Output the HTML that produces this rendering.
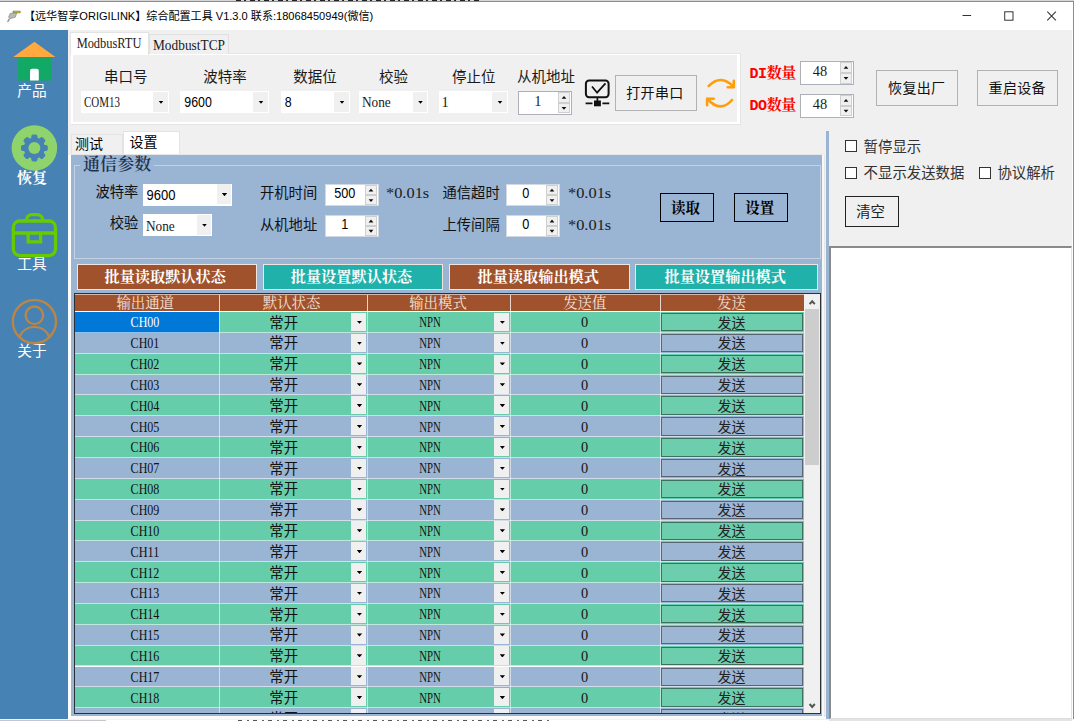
<!DOCTYPE html>
<html lang="zh-CN"><head><meta charset="utf-8"><title>综合配置工具</title>
<style>
html,body{margin:0;padding:0;}
body{width:1074px;height:721px;overflow:hidden;background:#fff;position:relative;font-family:"Liberation Sans","Noto Sans CJK SC",sans-serif;color:#000;}
div,span.t{position:absolute;box-sizing:border-box;}
span.t{white-space:nowrap;}
svg{position:absolute;overflow:visible;}
.ya{font-family:"Liberation Sans","Noto Sans CJK SC",sans-serif;}
.ss{font-family:"Liberation Serif","Noto Serif CJK SC",serif;}
.yn{font-family:"Liberation Sans",sans-serif;transform:scaleY(1.14);}
.ms{font-family:"Liberation Mono","Noto Serif CJK SC",monospace;}
.sm{font-family:"Liberation Serif",serif;color:#1a1a1a;}
.btn{border:1px solid #b2b2b2;background:#f0f0f0;}
.tri2{background:#000;clip-path:polygon(0 0,100% 0,50% 100%);}
</style></head><body>

<div style="left:0px;top:0px;width:1074px;height:1px;background:#d6d6d6;"></div>
<div style="left:0px;top:1px;width:1074px;height:1px;background:#8c8c8c;"></div>
<div style="left:236px;top:0px;width:243px;height:1px;background:repeating-linear-gradient(90deg,#222 0 5px,#d6d6d6 5px 8px,#222 8px 10px,#d6d6d6 10px 14px);"></div>
<div style="left:1073px;top:1px;width:1px;height:720px;background:#8c8c8c;"></div>
<div style="left:0px;top:30px;width:1072px;height:689px;background:#f0f0f0;"></div>
<svg style="left:6px;top:9.7px" width="17" height="14" viewBox="0 0 17 14"><path d="M7 1.2h7.2v1.6H7z" fill="#e4dc28" stroke="#5e580c" stroke-width=".6"/><path d="M4.2 3.4l6.6-.3-1.6 4.2-5.4 1.4-1.2-1.6z" fill="#b9b9b9" stroke="#7a7a7a" stroke-width=".6"/><path d="M2.6 8.6l1.6.8-2.2 3-1-.6z" fill="#9a9a9a"/></svg>
<span class="t ya" style="left:24px;top:6.3px;height:20px;line-height:20px;font-size:11.07px;">【远华智享ORIGILINK】综合配置工具 V1.3.0 联系:18068450949(微信)</span>
<svg style="left:960px;top:8px" width="100" height="16" viewBox="0 0 100 16"><path d="M2.5 7.500h8.600" stroke="#333" stroke-width="1" fill="none"/><rect x="44.700" y="3.800" width="8.300" height="8.400" stroke="#333" stroke-width="1" fill="none"/><path d="M87.300 3.700l8.600 8.600M95.900 3.700l-8.600 8.600" stroke="#333" stroke-width="1.050" fill="none"/></svg>
<div style="left:0px;top:30px;width:68px;height:689px;background:#4682b4;"></div>
<svg style="left:0;top:30px;z-index:2" width="68" height="340" viewBox="0 30 68 340"><rect x="18" y="56" width="33.3" height="24.6" fill="#12a865"/><path d="M13.2 56.9L34.4 41.8L55.4 56.9z" fill="#ffa940"/><path d="M30 80.6v-9.6a2.2 2.2 0 0 1 2.2-2.2h4.4a2.2 2.2 0 0 1 2.2 2.2v9.6z" fill="#fff"/><circle cx="34.4" cy="148" r="22.8" fill="#8fd36d"/><g fill="#4682b4" transform="translate(34.4 148)"><rect x="-3.1" y="-13.4" width="6.2" height="7" rx="1.8" transform="rotate(0)"/><rect x="-3.1" y="-13.4" width="6.2" height="7" rx="1.8" transform="rotate(45)"/><rect x="-3.1" y="-13.4" width="6.2" height="7" rx="1.8" transform="rotate(90)"/><rect x="-3.1" y="-13.4" width="6.2" height="7" rx="1.8" transform="rotate(135)"/><rect x="-3.1" y="-13.4" width="6.2" height="7" rx="1.8" transform="rotate(180)"/><rect x="-3.1" y="-13.4" width="6.2" height="7" rx="1.8" transform="rotate(225)"/><rect x="-3.1" y="-13.4" width="6.2" height="7" rx="1.8" transform="rotate(270)"/><rect x="-3.1" y="-13.4" width="6.2" height="7" rx="1.8" transform="rotate(315)"/><circle r="10.6"/></g><circle cx="34.4" cy="148" r="6" fill="#8fd36d"/><g fill="none" stroke="#66cc00" stroke-width="3.3"><rect x="13.3" y="221" width="42.2" height="34.6" rx="6.5"/><path d="M26.6 221v-1.2a5.2 5.2 0 0 1 5.2-5.2h5.6a5.2 5.2 0 0 1 5.2 5.2v1.2"/><path d="M13.3 233h42.2"/><path d="M28.2 233v8.800h12.400v-8.800"/></g><g fill="none" stroke="#b8864b" stroke-width="2.4"><circle cx="34.4" cy="321.6" r="21.6"/><circle cx="34.4" cy="315.3" r="8.8"/><path d="M19.6 336.5a16.2 16.2 0 0 1 29.6 0"/></g></svg>
<span class="t ya" style="left:2px;width:60px;text-align:center;top:81px;height:20px;line-height:20px;font-size:14.7px;color:#fff;">产品</span>
<span class="t ss" style="left:2px;width:60px;text-align:center;top:167.5px;height:20px;line-height:20px;font-size:15px;color:#fff;font-weight:bold;">恢复</span>
<span class="t ya" style="left:2px;width:60px;text-align:center;top:254px;height:20px;line-height:20px;font-size:14.7px;color:#fff;">工具</span>
<span class="t ya" style="left:2px;width:60px;text-align:center;top:341px;height:20px;line-height:20px;font-size:14.7px;color:#fff;">关于</span>
<div style="left:70.5px;top:53px;width:670px;height:72px;background:#e4e4e4;"></div>
<div style="left:70.5px;top:53px;width:669px;height:71px;background:#fff;border-top:1px solid #e6e6e6;"></div>
<div style="left:73.3px;top:55px;width:664.2px;height:67px;background:#f0f0f0;"></div>
<div style="left:149px;top:34px;width:79.5px;height:20px;background:#f0f0f0;border:1px solid #e0e0e0;border-bottom:none;"></div>
<div style="left:70px;top:32px;width:79px;height:23px;background:#fff;border:1px solid #e3e3e3;border-bottom:none;"></div>
<span class="t sm" style="left:69px;width:80px;text-align:center;top:33px;height:20px;line-height:20px;font-size:12px;font-size:14.4px;transform:scaleX(0.862);">ModbusRTU</span>
<span class="t sm" style="left:148.5px;width:80px;text-align:center;top:34.5px;height:20px;line-height:20px;font-size:12px;font-size:14.4px;transform:scaleX(0.928);">ModbustTCP</span>
<span class="t ya" style="left:85.8px;width:80px;text-align:center;top:66.8px;height:20px;line-height:20px;font-size:14.5px;color:#1a1a1a;">串口号</span>
<span class="t ya" style="left:185px;width:80px;text-align:center;top:66.8px;height:20px;line-height:20px;font-size:14.5px;color:#1a1a1a;">波特率</span>
<span class="t ya" style="left:275px;width:80px;text-align:center;top:66.8px;height:20px;line-height:20px;font-size:14.5px;color:#1a1a1a;">数据位</span>
<span class="t ya" style="left:353.4px;width:80px;text-align:center;top:66.8px;height:20px;line-height:20px;font-size:14.5px;color:#1a1a1a;">校验</span>
<span class="t ya" style="left:433.8px;width:80px;text-align:center;top:66.8px;height:20px;line-height:20px;font-size:14.5px;color:#1a1a1a;">停止位</span>
<span class="t ya" style="left:506px;width:80px;text-align:center;top:66.8px;height:20px;line-height:20px;font-size:14.5px;color:#1a1a1a;">从机地址</span>
<div style="left:80.5px;top:91.1px;width:88px;height:21.8px;background:#fff;"></div>
<div style="left:153.3px;top:91.9px;width:14.4px;height:19.8px;background:#f0f0f0;"></div>
<div class="tri2" style="left:158.3px;top:100.6px;width:5.4px;height:3.2px;"></div>
<span class="t sm" style="left:83.5px;top:91.7px;height:20px;line-height:20px;font-size:12px;font-size:14.4px;transform:scaleX(0.763);transform-origin:0 50%;">COM13</span>
<div style="left:180px;top:91.1px;width:88.5px;height:21.8px;background:#fff;"></div>
<div style="left:253.3px;top:91.9px;width:14.4px;height:19.8px;background:#f0f0f0;"></div>
<div class="tri2" style="left:258.3px;top:100.6px;width:5.4px;height:3.2px;"></div>
<span class="t yn" style="left:184.3px;top:92.2px;height:20px;line-height:20px;font-size:12.4px;">9600</span>
<div style="left:280.5px;top:91.1px;width:69px;height:21.8px;background:#fff;"></div>
<div style="left:334.3px;top:91.9px;width:14.4px;height:19.8px;background:#f0f0f0;"></div>
<div class="tri2" style="left:339.3px;top:100.6px;width:5.4px;height:3.2px;"></div>
<span class="t yn" style="left:284.8px;top:92.2px;height:20px;line-height:20px;font-size:12.4px;">8</span>
<div style="left:359px;top:91.1px;width:69px;height:21.8px;background:#fff;"></div>
<div style="left:412.8px;top:91.9px;width:14.4px;height:19.8px;background:#f0f0f0;"></div>
<div class="tri2" style="left:417.8px;top:100.6px;width:5.4px;height:3.2px;"></div>
<span class="t sm" style="left:362px;top:91.7px;height:20px;line-height:20px;font-size:12px;font-size:14.4px;transform:scaleX(0.923);transform-origin:0 50%;">None</span>
<div style="left:438.5px;top:91.1px;width:69px;height:21.8px;background:#fff;"></div>
<div style="left:492.3px;top:91.9px;width:14.4px;height:19.8px;background:#f0f0f0;"></div>
<div class="tri2" style="left:497.3px;top:100.6px;width:5.4px;height:3.2px;"></div>
<span class="t sm" style="left:441.5px;top:91.7px;height:20px;line-height:20px;font-size:12px;font-size:14.4px;transform:scaleX(1.0);transform-origin:0 50%;">1</span>
<div style="left:517.5px;top:91px;width:54.5px;height:23.7px;background:#fff;border:1px solid #adb0b6;"></div>
<div style="left:558px;top:92.2px;width:12.2px;height:10.55px;background:#f0f0f0;border:1px solid #cfcfcf;"></div>
<div style="left:558px;top:102.95px;width:12.2px;height:10.55px;background:#f0f0f0;border:1px solid #cfcfcf;"></div>
<svg style="left:561.10px;top:91.00px" width="6" height="23.7" viewBox="0 0 6 23.7"><path d="M0.600 7.77L3 4.97L5.400 7.77z" fill="#111"/><path d="M0.600 15.92L3 18.72L5.400 15.92z" fill="#111"/></svg>
<span class="t sm" style="left:517.75px;width:40px;text-align:center;top:91.15px;height:20px;line-height:20px;font-size:12px;font-size:14.4px;transform:scaleX(1.0);">1</span>
<svg style="left:583px;top:78px" width="28" height="30" viewBox="0 0 28 30"><rect x="2.9" y="2.5" width="22.7" height="16.7" rx="3.2" fill="none" stroke="#111" stroke-width="2"/><path d="M9 8.5l5.1 6.2l8.4-9.3" fill="none" stroke="#111" stroke-width="1.8"/><path d="M14.4 20v3" stroke="#111" stroke-width="1.7"/><rect x="11" y="22.5" width="6.9" height="5.8" fill="#111"/><path d="M2.6 25.3h6.9M19.4 25.3h6.9" stroke="#111" stroke-width="1.8"/></svg>
<div class="btn" style="left:615px;top:75px;width:82px;height:36px;"></div>
<span class="t ya" style="left:613.9px;width:82px;text-align:center;top:82.9px;height:20px;line-height:20px;font-size:14px;letter-spacing:.3px;color:#111;">打开串口</span>
<svg style="left:700px;top:72px" width="42" height="42" viewBox="0 0 42 42"><g fill="none" stroke="#ff9d0a" stroke-width="2.6" stroke-linecap="round" stroke-linejoin="round"><path d="M8.7 14Q20.8 1.6 33.4 14.6"/><path d="M33.8 8.7V15.3H27.7"/><path d="M32 28Q20.4 41.2 7.4 27"/><path d="M13.7 26.7H7.1V33.2"/></g></svg>
<span class="t ms" style="left:749.5px;top:65.2px;height:20px;line-height:20px;font-size:15px;font-weight:bold;color:#ff0000;letter-spacing:-.4px;">DI数量</span>
<span class="t ms" style="left:749.5px;top:97.2px;height:20px;line-height:20px;font-size:15px;font-weight:bold;color:#ff0000;letter-spacing:-.4px;">DO数量</span>
<div style="left:800px;top:61px;width:54px;height:23.8px;background:#fff;border:1px solid #adb0b6;"></div>
<div style="left:840px;top:62.2px;width:12.2px;height:10.6px;background:#f0f0f0;border:1px solid #cfcfcf;"></div>
<div style="left:840px;top:73px;width:12.2px;height:10.6px;background:#f0f0f0;border:1px solid #cfcfcf;"></div>
<svg style="left:843.10px;top:61.00px" width="6" height="23.8" viewBox="0 0 6 23.8"><path d="M0.600 7.80L3 5.00L5.400 7.80z" fill="#111"/><path d="M0.600 16.00L3 18.80L5.400 16.00z" fill="#111"/></svg>
<span class="t sm" style="left:800px;width:40px;text-align:center;top:61.2px;height:20px;line-height:20px;font-size:12px;font-size:14.4px;transform:scaleX(1.0);">48</span>
<div style="left:800px;top:94px;width:54px;height:23.5px;background:#fff;border:1px solid #adb0b6;"></div>
<div style="left:840px;top:95.2px;width:12.2px;height:10.45px;background:#f0f0f0;border:1px solid #cfcfcf;"></div>
<div style="left:840px;top:105.85px;width:12.2px;height:10.45px;background:#f0f0f0;border:1px solid #cfcfcf;"></div>
<svg style="left:843.10px;top:94.00px" width="6" height="23.5" viewBox="0 0 6 23.5"><path d="M0.600 7.72L3 4.92L5.400 7.72z" fill="#111"/><path d="M0.600 15.77L3 18.57L5.400 15.77z" fill="#111"/></svg>
<span class="t sm" style="left:800px;width:40px;text-align:center;top:94.05px;height:20px;line-height:20px;font-size:12px;font-size:14.4px;transform:scaleX(1.0);">48</span>
<div class="btn" style="left:876px;top:69.5px;width:81.5px;height:36.3px;"></div>
<span class="t ya" style="left:875.7px;width:82px;text-align:center;top:78px;height:20px;line-height:20px;font-size:14px;letter-spacing:.3px;color:#111;">恢复出厂</span>
<div class="btn" style="left:976.5px;top:69.5px;width:81.5px;height:36.3px;"></div>
<span class="t ya" style="left:976.2px;width:82px;text-align:center;top:78px;height:20px;line-height:20px;font-size:14px;letter-spacing:.3px;color:#111;">重启设备</span>
<div style="left:70.5px;top:134px;width:52px;height:20.4px;background:#f0f0f0;border:1px solid #e3e3e3;border-bottom:none;"></div>
<div style="left:122.5px;top:131px;width:57px;height:23.5px;background:#fff;border:1px solid #e3e3e3;border-bottom:none;"></div>
<span class="t ya" style="left:75px;top:133.8px;height:20px;line-height:20px;font-size:14px;">测试</span>
<span class="t ya" style="left:129.6px;top:132.2px;height:20px;line-height:20px;font-size:14px;">设置</span>
<div style="left:68px;top:155px;width:3.5px;height:562px;background:#fff;"></div>
<div style="left:71px;top:154px;width:752px;height:1px;background:#e6e6e6;"></div>
<div style="left:822px;top:155px;width:2px;height:562px;background:#f7f7f7;"></div>
<div style="left:824px;top:155px;width:1px;height:562px;background:#e6e6e6;"></div>
<div style="left:71px;top:716px;width:753px;height:1.3px;background:#fbfbfb;"></div>
<div style="left:71.4px;top:154.6px;width:750.9px;height:561.3px;background:#9ab4d3;"></div>
<div style="left:826px;top:131px;width:3px;height:588.5px;background:#9ab4d3;"></div>
<div style="left:74px;top:165px;width:746.5px;height:94px;border:1px solid #c3d1e2;"></div>
<span class="t ss" style="left:80px;top:154.5px;height:20px;line-height:20px;font-size:17px;color:#1f3350;font-weight:600;background:#9ab4d3;padding:0 3px;letter-spacing:.1px;">通信参数</span>
<span class="t ya" style="left:58.4px;width:80px;text-align:right;top:182.3px;height:20px;line-height:20px;font-size:14.3px;color:#111;">波特率</span>
<span class="t ya" style="left:58.4px;width:80px;text-align:right;top:212.5px;height:20px;line-height:20px;font-size:14.3px;color:#111;">校验</span>
<div style="left:143px;top:183.5px;width:89px;height:22px;background:#fff;"></div>
<div style="left:216.8px;top:184.3px;width:14.4px;height:20px;background:#f0f0f0;"></div>
<div class="tri2" style="left:221.8px;top:193.1px;width:5.4px;height:3.2px;"></div>
<span class="t yn" style="left:146.6px;top:184.7px;height:20px;line-height:20px;font-size:13px;">9600</span>
<div style="left:143px;top:214px;width:69px;height:22px;background:#fff;"></div>
<div style="left:196.8px;top:214.8px;width:14.4px;height:20px;background:#f0f0f0;"></div>
<div class="tri2" style="left:201.8px;top:223.6px;width:5.4px;height:3.2px;"></div>
<span class="t sm" style="left:146px;top:215.5px;height:20px;line-height:20px;font-size:12px;font-size:14.4px;transform:scaleX(0.923);transform-origin:0 50%;">None</span>
<span class="t ya" style="left:260px;top:183.3px;height:20px;line-height:20px;font-size:14.3px;color:#111;">开机时间</span>
<span class="t ya" style="left:260px;top:215px;height:20px;line-height:20px;font-size:14.3px;color:#111;">从机地址</span>
<div style="left:325px;top:183.8px;width:53.7px;height:22.7px;background:#fff;border:1px solid #d3d9e2;"></div>
<div style="left:364.7px;top:185px;width:12.2px;height:10.05px;background:#f0f0f0;border:1px solid #cfcfcf;"></div>
<div style="left:364.7px;top:195.25px;width:12.2px;height:10.05px;background:#f0f0f0;border:1px solid #cfcfcf;"></div>
<svg style="left:367.80px;top:183.80px" width="6" height="22.7" viewBox="0 0 6 22.7"><path d="M0.600 7.52L3 4.72L5.400 7.52z" fill="#111"/><path d="M0.600 15.17L3 17.97L5.400 15.17z" fill="#111"/></svg>
<span class="t yn" style="left:324.85px;width:40px;text-align:center;top:183.45px;height:20px;line-height:20px;font-size:12.7px;">500</span>
<div style="left:325px;top:215px;width:53.7px;height:22.3px;background:#fff;border:1px solid #d3d9e2;"></div>
<div style="left:364.7px;top:216.2px;width:12.2px;height:9.85px;background:#f0f0f0;border:1px solid #cfcfcf;"></div>
<div style="left:364.7px;top:226.25px;width:12.2px;height:9.85px;background:#f0f0f0;border:1px solid #cfcfcf;"></div>
<svg style="left:367.80px;top:215.00px" width="6" height="22.3" viewBox="0 0 6 22.3"><path d="M0.600 7.42L3 4.62L5.400 7.42z" fill="#111"/><path d="M0.600 14.87L3 17.67L5.400 14.87z" fill="#111"/></svg>
<span class="t yn" style="left:324.85px;width:40px;text-align:center;top:214.45px;height:20px;line-height:20px;font-size:12.7px;">1</span>
<span class="t sm" style="left:386px;top:183.4px;height:20px;line-height:20px;font-size:12px;letter-spacing:0px;font-size:14.4px;transform:scaleX(1.137);transform-origin:0 50%;">*0.01s</span>
<span class="t ya" style="left:442.5px;top:183.4px;height:20px;line-height:20px;font-size:14.3px;color:#111;">通信超时</span>
<span class="t ya" style="left:442.5px;top:214.8px;height:20px;line-height:20px;font-size:14.3px;color:#111;">上传间隔</span>
<div style="left:506px;top:183.8px;width:53.7px;height:22.7px;background:#fff;border:1px solid #d3d9e2;"></div>
<div style="left:545.7px;top:185px;width:12.2px;height:10.05px;background:#f0f0f0;border:1px solid #cfcfcf;"></div>
<div style="left:545.7px;top:195.25px;width:12.2px;height:10.05px;background:#f0f0f0;border:1px solid #cfcfcf;"></div>
<svg style="left:548.80px;top:183.80px" width="6" height="22.7" viewBox="0 0 6 22.7"><path d="M0.600 7.52L3 4.72L5.400 7.52z" fill="#111"/><path d="M0.600 15.17L3 17.97L5.400 15.17z" fill="#111"/></svg>
<span class="t yn" style="left:505.85px;width:40px;text-align:center;top:183.45px;height:20px;line-height:20px;font-size:12.7px;">0</span>
<div style="left:506px;top:215px;width:53.7px;height:22.3px;background:#fff;border:1px solid #d3d9e2;"></div>
<div style="left:545.7px;top:216.2px;width:12.2px;height:9.85px;background:#f0f0f0;border:1px solid #cfcfcf;"></div>
<div style="left:545.7px;top:226.25px;width:12.2px;height:9.85px;background:#f0f0f0;border:1px solid #cfcfcf;"></div>
<svg style="left:548.80px;top:215.00px" width="6" height="22.3" viewBox="0 0 6 22.3"><path d="M0.600 7.42L3 4.62L5.400 7.42z" fill="#111"/><path d="M0.600 14.87L3 17.67L5.400 14.87z" fill="#111"/></svg>
<span class="t yn" style="left:505.85px;width:40px;text-align:center;top:214.45px;height:20px;line-height:20px;font-size:12.7px;">0</span>
<span class="t sm" style="left:567.5px;top:183.4px;height:20px;line-height:20px;font-size:12px;font-size:14.4px;transform:scaleX(1.137);transform-origin:0 50%;">*0.01s</span>
<span class="t sm" style="left:567.5px;top:214.8px;height:20px;line-height:20px;font-size:12px;font-size:14.4px;transform:scaleX(1.137);transform-origin:0 50%;">*0.01s</span>
<div style="left:659.7px;top:192.7px;width:54px;height:29px;border:1px solid #000;"></div>
<span class="t ss" style="left:658.5px;width:54px;text-align:center;top:197.5px;height:20px;line-height:20px;font-size:14.5px;font-weight:bold;">读取</span>
<div style="left:734px;top:192.7px;width:54px;height:29px;border:1px solid #000;"></div>
<span class="t ss" style="left:732.8px;width:54px;text-align:center;top:197.5px;height:20px;line-height:20px;font-size:14.5px;font-weight:bold;">设置</span>
<div style="left:76.5px;top:263.5px;width:180px;height:26.3px;background:#a0522d;border:1px solid #f1e4de;"></div>
<span class="t ss" style="left:75.2px;width:180.0px;text-align:center;top:267px;height:20px;line-height:20px;font-size:15.2px;font-weight:bold;color:#fff;">批量读取默认状态</span>
<div style="left:263px;top:263.5px;width:179.6px;height:26.3px;background:#20b2aa;border:1px solid #f1e4de;"></div>
<span class="t ss" style="left:261.7px;width:179.60000000000002px;text-align:center;top:267px;height:20px;line-height:20px;font-size:15.2px;font-weight:bold;color:#fff;">批量设置默认状态</span>
<div style="left:449px;top:263.5px;width:181px;height:26.3px;background:#a0522d;border:1px solid #f1e4de;"></div>
<span class="t ss" style="left:447.7px;width:181px;text-align:center;top:267px;height:20px;line-height:20px;font-size:15.2px;font-weight:bold;color:#fff;">批量读取输出模式</span>
<div style="left:635.4px;top:263.5px;width:182.2px;height:26.3px;background:#20b2aa;border:1px solid #f1e4de;"></div>
<span class="t ss" style="left:634.1px;width:182.20000000000005px;text-align:center;top:267px;height:20px;line-height:20px;font-size:15.2px;font-weight:bold;color:#fff;">批量设置输出模式</span>
<div style="left:73.5px;top:293px;width:747.5px;height:421px;background:#fff;border:1px solid #2b2f36;overflow:hidden;"></div>
<div style="left:74.6px;top:294.8px;width:729.3px;height:16.599999999999966px;background:#a0522d;"></div>
<div style="left:74.6px;top:294px;width:729.3px;height:1px;background:#d9b7a6;"></div>
<span class="t ss" style="left:85.2px;width:120px;text-align:center;top:294.9px;height:16px;line-height:16px;font-size:14.4px;color:#f6e3da;">输出通道</span>
<span class="t ss" style="left:231.6px;width:120px;text-align:center;top:294.9px;height:16px;line-height:16px;font-size:14.4px;color:#f6e3da;">默认状态</span>
<div style="left:219.1px;top:294.8px;width:1px;height:16.6px;background:#e9d6cc;"></div>
<span class="t ss" style="left:378px;width:120px;text-align:center;top:294.9px;height:16px;line-height:16px;font-size:14.4px;color:#f6e3da;">输出模式</span>
<div style="left:367.1px;top:294.8px;width:1px;height:16.6px;background:#e9d6cc;"></div>
<span class="t ss" style="left:524.8px;width:120px;text-align:center;top:294.9px;height:16px;line-height:16px;font-size:14.4px;color:#f6e3da;">发送值</span>
<div style="left:510.1px;top:294.8px;width:1px;height:16.6px;background:#e9d6cc;"></div>
<span class="t ss" style="left:671.4px;width:120px;text-align:center;top:294.9px;height:16px;line-height:16px;font-size:14.4px;color:#f6e3da;">发送</span>
<div style="left:660.1px;top:294.8px;width:1px;height:16.6px;background:#e9d6cc;"></div>
<div style="left:74.6px;top:312.00px;width:729.3px;height:20.85px;background:#66cdaa;overflow:hidden;">
<div style="left:0;top:0;width:144.5px;height:20.853px;background:#0078d7;"></div>
<span class="t sm" style="left:30.4px;width:80px;text-align:center;top:0.33px;height:20px;line-height:20px;font-size:14.4px;transform:scaleX(0.837);color:#fff;">CH00</span>
<span class="t ya" style="left:169.1px;width:80px;text-align:center;top:0.63px;height:20px;line-height:20px;font-size:14.4px;color:#111;">常开</span>
<span class="t sm" style="left:315.2px;width:80px;text-align:center;top:0.33px;height:20px;line-height:20px;font-size:14.4px;transform:scaleX(0.75);color:#111;">NPN</span>
<span class="t sm" style="left:470.1px;width:80px;text-align:center;top:0.33px;height:20px;line-height:20px;font-size:14.4px;color:#111;">0</span>
<div style="left:276.5px;top:.8px;width:15.1px;height:18.2px;background:#f0f0f0;"></div>
<div class="tri2" style="left:282.2px;top:8.7px;width:5.4px;height:3.1px;"></div>
<div style="left:419.6px;top:.8px;width:14.7px;height:18.2px;background:#f0f0f0;"></div>
<div class="tri2" style="left:425.1px;top:8.7px;width:5.4px;height:3.1px;"></div>
<div style="left:586.8px;top:1px;width:141.7px;height:18.4px;border:1.6px solid rgba(0,0,0,.45);background:rgba(255,255,255,.04);"></div>
<span class="t ya" style="left:616.8px;width:80px;text-align:center;top:0.63px;height:20px;line-height:20px;font-size:14px;color:#222;">发送</span>
<div style="left:144.5px;top:0;width:1px;height:20.853px;background:rgba(255,255,255,.55);"></div>
<div style="left:292.5px;top:0;width:1px;height:20.853px;background:rgba(255,255,255,.55);"></div>
<div style="left:435.5px;top:0;width:1px;height:20.853px;background:rgba(255,255,255,.55);"></div>
<div style="left:585.5px;top:0;width:1px;height:20.853px;background:rgba(255,255,255,.55);"></div>
<div style="left:0;top:19.85px;width:800px;height:1px;background:rgba(255,255,255,.55);"></div>
</div>
<div style="left:74.6px;top:332.85px;width:729.3px;height:20.85px;background:#9ab4d3;overflow:hidden;">
<span class="t sm" style="left:30.4px;width:80px;text-align:center;top:0.33px;height:20px;line-height:20px;font-size:14.4px;transform:scaleX(0.837);color:#111;">CH01</span>
<span class="t ya" style="left:169.1px;width:80px;text-align:center;top:0.63px;height:20px;line-height:20px;font-size:14.4px;color:#111;">常开</span>
<span class="t sm" style="left:315.2px;width:80px;text-align:center;top:0.33px;height:20px;line-height:20px;font-size:14.4px;transform:scaleX(0.75);color:#111;">NPN</span>
<span class="t sm" style="left:470.1px;width:80px;text-align:center;top:0.33px;height:20px;line-height:20px;font-size:14.4px;color:#111;">0</span>
<div style="left:276.5px;top:.8px;width:15.1px;height:18.2px;background:#f0f0f0;"></div>
<div class="tri2" style="left:282.2px;top:8.7px;width:5.4px;height:3.1px;"></div>
<div style="left:419.6px;top:.8px;width:14.7px;height:18.2px;background:#f0f0f0;"></div>
<div class="tri2" style="left:425.1px;top:8.7px;width:5.4px;height:3.1px;"></div>
<div style="left:586.8px;top:1px;width:141.7px;height:18.4px;border:1.6px solid rgba(0,0,0,.45);background:rgba(255,255,255,.04);"></div>
<span class="t ya" style="left:616.8px;width:80px;text-align:center;top:0.63px;height:20px;line-height:20px;font-size:14px;color:#222;">发送</span>
<div style="left:144.5px;top:0;width:1px;height:20.853px;background:rgba(255,255,255,.55);"></div>
<div style="left:292.5px;top:0;width:1px;height:20.853px;background:rgba(255,255,255,.55);"></div>
<div style="left:435.5px;top:0;width:1px;height:20.853px;background:rgba(255,255,255,.55);"></div>
<div style="left:585.5px;top:0;width:1px;height:20.853px;background:rgba(255,255,255,.55);"></div>
<div style="left:0;top:19.85px;width:800px;height:1px;background:rgba(255,255,255,.55);"></div>
</div>
<div style="left:74.6px;top:353.71px;width:729.3px;height:20.85px;background:#66cdaa;overflow:hidden;">
<span class="t sm" style="left:30.4px;width:80px;text-align:center;top:0.33px;height:20px;line-height:20px;font-size:14.4px;transform:scaleX(0.837);color:#111;">CH02</span>
<span class="t ya" style="left:169.1px;width:80px;text-align:center;top:0.63px;height:20px;line-height:20px;font-size:14.4px;color:#111;">常开</span>
<span class="t sm" style="left:315.2px;width:80px;text-align:center;top:0.33px;height:20px;line-height:20px;font-size:14.4px;transform:scaleX(0.75);color:#111;">NPN</span>
<span class="t sm" style="left:470.1px;width:80px;text-align:center;top:0.33px;height:20px;line-height:20px;font-size:14.4px;color:#111;">0</span>
<div style="left:276.5px;top:.8px;width:15.1px;height:18.2px;background:#f0f0f0;"></div>
<div class="tri2" style="left:282.2px;top:8.7px;width:5.4px;height:3.1px;"></div>
<div style="left:419.6px;top:.8px;width:14.7px;height:18.2px;background:#f0f0f0;"></div>
<div class="tri2" style="left:425.1px;top:8.7px;width:5.4px;height:3.1px;"></div>
<div style="left:586.8px;top:1px;width:141.7px;height:18.4px;border:1.6px solid rgba(0,0,0,.45);background:rgba(255,255,255,.04);"></div>
<span class="t ya" style="left:616.8px;width:80px;text-align:center;top:0.63px;height:20px;line-height:20px;font-size:14px;color:#222;">发送</span>
<div style="left:144.5px;top:0;width:1px;height:20.853px;background:rgba(255,255,255,.55);"></div>
<div style="left:292.5px;top:0;width:1px;height:20.853px;background:rgba(255,255,255,.55);"></div>
<div style="left:435.5px;top:0;width:1px;height:20.853px;background:rgba(255,255,255,.55);"></div>
<div style="left:585.5px;top:0;width:1px;height:20.853px;background:rgba(255,255,255,.55);"></div>
<div style="left:0;top:19.85px;width:800px;height:1px;background:rgba(255,255,255,.55);"></div>
</div>
<div style="left:74.6px;top:374.56px;width:729.3px;height:20.85px;background:#9ab4d3;overflow:hidden;">
<span class="t sm" style="left:30.4px;width:80px;text-align:center;top:0.33px;height:20px;line-height:20px;font-size:14.4px;transform:scaleX(0.837);color:#111;">CH03</span>
<span class="t ya" style="left:169.1px;width:80px;text-align:center;top:0.63px;height:20px;line-height:20px;font-size:14.4px;color:#111;">常开</span>
<span class="t sm" style="left:315.2px;width:80px;text-align:center;top:0.33px;height:20px;line-height:20px;font-size:14.4px;transform:scaleX(0.75);color:#111;">NPN</span>
<span class="t sm" style="left:470.1px;width:80px;text-align:center;top:0.33px;height:20px;line-height:20px;font-size:14.4px;color:#111;">0</span>
<div style="left:276.5px;top:.8px;width:15.1px;height:18.2px;background:#f0f0f0;"></div>
<div class="tri2" style="left:282.2px;top:8.7px;width:5.4px;height:3.1px;"></div>
<div style="left:419.6px;top:.8px;width:14.7px;height:18.2px;background:#f0f0f0;"></div>
<div class="tri2" style="left:425.1px;top:8.7px;width:5.4px;height:3.1px;"></div>
<div style="left:586.8px;top:1px;width:141.7px;height:18.4px;border:1.6px solid rgba(0,0,0,.45);background:rgba(255,255,255,.04);"></div>
<span class="t ya" style="left:616.8px;width:80px;text-align:center;top:0.63px;height:20px;line-height:20px;font-size:14px;color:#222;">发送</span>
<div style="left:144.5px;top:0;width:1px;height:20.853px;background:rgba(255,255,255,.55);"></div>
<div style="left:292.5px;top:0;width:1px;height:20.853px;background:rgba(255,255,255,.55);"></div>
<div style="left:435.5px;top:0;width:1px;height:20.853px;background:rgba(255,255,255,.55);"></div>
<div style="left:585.5px;top:0;width:1px;height:20.853px;background:rgba(255,255,255,.55);"></div>
<div style="left:0;top:19.85px;width:800px;height:1px;background:rgba(255,255,255,.55);"></div>
</div>
<div style="left:74.6px;top:395.41px;width:729.3px;height:20.85px;background:#66cdaa;overflow:hidden;">
<span class="t sm" style="left:30.4px;width:80px;text-align:center;top:0.33px;height:20px;line-height:20px;font-size:14.4px;transform:scaleX(0.837);color:#111;">CH04</span>
<span class="t ya" style="left:169.1px;width:80px;text-align:center;top:0.63px;height:20px;line-height:20px;font-size:14.4px;color:#111;">常开</span>
<span class="t sm" style="left:315.2px;width:80px;text-align:center;top:0.33px;height:20px;line-height:20px;font-size:14.4px;transform:scaleX(0.75);color:#111;">NPN</span>
<span class="t sm" style="left:470.1px;width:80px;text-align:center;top:0.33px;height:20px;line-height:20px;font-size:14.4px;color:#111;">0</span>
<div style="left:276.5px;top:.8px;width:15.1px;height:18.2px;background:#f0f0f0;"></div>
<div class="tri2" style="left:282.2px;top:8.7px;width:5.4px;height:3.1px;"></div>
<div style="left:419.6px;top:.8px;width:14.7px;height:18.2px;background:#f0f0f0;"></div>
<div class="tri2" style="left:425.1px;top:8.7px;width:5.4px;height:3.1px;"></div>
<div style="left:586.8px;top:1px;width:141.7px;height:18.4px;border:1.6px solid rgba(0,0,0,.45);background:rgba(255,255,255,.04);"></div>
<span class="t ya" style="left:616.8px;width:80px;text-align:center;top:0.63px;height:20px;line-height:20px;font-size:14px;color:#222;">发送</span>
<div style="left:144.5px;top:0;width:1px;height:20.853px;background:rgba(255,255,255,.55);"></div>
<div style="left:292.5px;top:0;width:1px;height:20.853px;background:rgba(255,255,255,.55);"></div>
<div style="left:435.5px;top:0;width:1px;height:20.853px;background:rgba(255,255,255,.55);"></div>
<div style="left:585.5px;top:0;width:1px;height:20.853px;background:rgba(255,255,255,.55);"></div>
<div style="left:0;top:19.85px;width:800px;height:1px;background:rgba(255,255,255,.55);"></div>
</div>
<div style="left:74.6px;top:416.26px;width:729.3px;height:20.85px;background:#9ab4d3;overflow:hidden;">
<span class="t sm" style="left:30.4px;width:80px;text-align:center;top:0.33px;height:20px;line-height:20px;font-size:14.4px;transform:scaleX(0.837);color:#111;">CH05</span>
<span class="t ya" style="left:169.1px;width:80px;text-align:center;top:0.63px;height:20px;line-height:20px;font-size:14.4px;color:#111;">常开</span>
<span class="t sm" style="left:315.2px;width:80px;text-align:center;top:0.33px;height:20px;line-height:20px;font-size:14.4px;transform:scaleX(0.75);color:#111;">NPN</span>
<span class="t sm" style="left:470.1px;width:80px;text-align:center;top:0.33px;height:20px;line-height:20px;font-size:14.4px;color:#111;">0</span>
<div style="left:276.5px;top:.8px;width:15.1px;height:18.2px;background:#f0f0f0;"></div>
<div class="tri2" style="left:282.2px;top:8.7px;width:5.4px;height:3.1px;"></div>
<div style="left:419.6px;top:.8px;width:14.7px;height:18.2px;background:#f0f0f0;"></div>
<div class="tri2" style="left:425.1px;top:8.7px;width:5.4px;height:3.1px;"></div>
<div style="left:586.8px;top:1px;width:141.7px;height:18.4px;border:1.6px solid rgba(0,0,0,.45);background:rgba(255,255,255,.04);"></div>
<span class="t ya" style="left:616.8px;width:80px;text-align:center;top:0.63px;height:20px;line-height:20px;font-size:14px;color:#222;">发送</span>
<div style="left:144.5px;top:0;width:1px;height:20.853px;background:rgba(255,255,255,.55);"></div>
<div style="left:292.5px;top:0;width:1px;height:20.853px;background:rgba(255,255,255,.55);"></div>
<div style="left:435.5px;top:0;width:1px;height:20.853px;background:rgba(255,255,255,.55);"></div>
<div style="left:585.5px;top:0;width:1px;height:20.853px;background:rgba(255,255,255,.55);"></div>
<div style="left:0;top:19.85px;width:800px;height:1px;background:rgba(255,255,255,.55);"></div>
</div>
<div style="left:74.6px;top:437.12px;width:729.3px;height:20.85px;background:#66cdaa;overflow:hidden;">
<span class="t sm" style="left:30.4px;width:80px;text-align:center;top:0.33px;height:20px;line-height:20px;font-size:14.4px;transform:scaleX(0.837);color:#111;">CH06</span>
<span class="t ya" style="left:169.1px;width:80px;text-align:center;top:0.63px;height:20px;line-height:20px;font-size:14.4px;color:#111;">常开</span>
<span class="t sm" style="left:315.2px;width:80px;text-align:center;top:0.33px;height:20px;line-height:20px;font-size:14.4px;transform:scaleX(0.75);color:#111;">NPN</span>
<span class="t sm" style="left:470.1px;width:80px;text-align:center;top:0.33px;height:20px;line-height:20px;font-size:14.4px;color:#111;">0</span>
<div style="left:276.5px;top:.8px;width:15.1px;height:18.2px;background:#f0f0f0;"></div>
<div class="tri2" style="left:282.2px;top:8.7px;width:5.4px;height:3.1px;"></div>
<div style="left:419.6px;top:.8px;width:14.7px;height:18.2px;background:#f0f0f0;"></div>
<div class="tri2" style="left:425.1px;top:8.7px;width:5.4px;height:3.1px;"></div>
<div style="left:586.8px;top:1px;width:141.7px;height:18.4px;border:1.6px solid rgba(0,0,0,.45);background:rgba(255,255,255,.04);"></div>
<span class="t ya" style="left:616.8px;width:80px;text-align:center;top:0.63px;height:20px;line-height:20px;font-size:14px;color:#222;">发送</span>
<div style="left:144.5px;top:0;width:1px;height:20.853px;background:rgba(255,255,255,.55);"></div>
<div style="left:292.5px;top:0;width:1px;height:20.853px;background:rgba(255,255,255,.55);"></div>
<div style="left:435.5px;top:0;width:1px;height:20.853px;background:rgba(255,255,255,.55);"></div>
<div style="left:585.5px;top:0;width:1px;height:20.853px;background:rgba(255,255,255,.55);"></div>
<div style="left:0;top:19.85px;width:800px;height:1px;background:rgba(255,255,255,.55);"></div>
</div>
<div style="left:74.6px;top:457.97px;width:729.3px;height:20.85px;background:#9ab4d3;overflow:hidden;">
<span class="t sm" style="left:30.4px;width:80px;text-align:center;top:0.33px;height:20px;line-height:20px;font-size:14.4px;transform:scaleX(0.837);color:#111;">CH07</span>
<span class="t ya" style="left:169.1px;width:80px;text-align:center;top:0.63px;height:20px;line-height:20px;font-size:14.4px;color:#111;">常开</span>
<span class="t sm" style="left:315.2px;width:80px;text-align:center;top:0.33px;height:20px;line-height:20px;font-size:14.4px;transform:scaleX(0.75);color:#111;">NPN</span>
<span class="t sm" style="left:470.1px;width:80px;text-align:center;top:0.33px;height:20px;line-height:20px;font-size:14.4px;color:#111;">0</span>
<div style="left:276.5px;top:.8px;width:15.1px;height:18.2px;background:#f0f0f0;"></div>
<div class="tri2" style="left:282.2px;top:8.7px;width:5.4px;height:3.1px;"></div>
<div style="left:419.6px;top:.8px;width:14.7px;height:18.2px;background:#f0f0f0;"></div>
<div class="tri2" style="left:425.1px;top:8.7px;width:5.4px;height:3.1px;"></div>
<div style="left:586.8px;top:1px;width:141.7px;height:18.4px;border:1.6px solid rgba(0,0,0,.45);background:rgba(255,255,255,.04);"></div>
<span class="t ya" style="left:616.8px;width:80px;text-align:center;top:0.63px;height:20px;line-height:20px;font-size:14px;color:#222;">发送</span>
<div style="left:144.5px;top:0;width:1px;height:20.853px;background:rgba(255,255,255,.55);"></div>
<div style="left:292.5px;top:0;width:1px;height:20.853px;background:rgba(255,255,255,.55);"></div>
<div style="left:435.5px;top:0;width:1px;height:20.853px;background:rgba(255,255,255,.55);"></div>
<div style="left:585.5px;top:0;width:1px;height:20.853px;background:rgba(255,255,255,.55);"></div>
<div style="left:0;top:19.85px;width:800px;height:1px;background:rgba(255,255,255,.55);"></div>
</div>
<div style="left:74.6px;top:478.82px;width:729.3px;height:20.85px;background:#66cdaa;overflow:hidden;">
<span class="t sm" style="left:30.4px;width:80px;text-align:center;top:0.33px;height:20px;line-height:20px;font-size:14.4px;transform:scaleX(0.837);color:#111;">CH08</span>
<span class="t ya" style="left:169.1px;width:80px;text-align:center;top:0.63px;height:20px;line-height:20px;font-size:14.4px;color:#111;">常开</span>
<span class="t sm" style="left:315.2px;width:80px;text-align:center;top:0.33px;height:20px;line-height:20px;font-size:14.4px;transform:scaleX(0.75);color:#111;">NPN</span>
<span class="t sm" style="left:470.1px;width:80px;text-align:center;top:0.33px;height:20px;line-height:20px;font-size:14.4px;color:#111;">0</span>
<div style="left:276.5px;top:.8px;width:15.1px;height:18.2px;background:#f0f0f0;"></div>
<div class="tri2" style="left:282.2px;top:8.7px;width:5.4px;height:3.1px;"></div>
<div style="left:419.6px;top:.8px;width:14.7px;height:18.2px;background:#f0f0f0;"></div>
<div class="tri2" style="left:425.1px;top:8.7px;width:5.4px;height:3.1px;"></div>
<div style="left:586.8px;top:1px;width:141.7px;height:18.4px;border:1.6px solid rgba(0,0,0,.45);background:rgba(255,255,255,.04);"></div>
<span class="t ya" style="left:616.8px;width:80px;text-align:center;top:0.63px;height:20px;line-height:20px;font-size:14px;color:#222;">发送</span>
<div style="left:144.5px;top:0;width:1px;height:20.853px;background:rgba(255,255,255,.55);"></div>
<div style="left:292.5px;top:0;width:1px;height:20.853px;background:rgba(255,255,255,.55);"></div>
<div style="left:435.5px;top:0;width:1px;height:20.853px;background:rgba(255,255,255,.55);"></div>
<div style="left:585.5px;top:0;width:1px;height:20.853px;background:rgba(255,255,255,.55);"></div>
<div style="left:0;top:19.85px;width:800px;height:1px;background:rgba(255,255,255,.55);"></div>
</div>
<div style="left:74.6px;top:499.68px;width:729.3px;height:20.85px;background:#9ab4d3;overflow:hidden;">
<span class="t sm" style="left:30.4px;width:80px;text-align:center;top:0.33px;height:20px;line-height:20px;font-size:14.4px;transform:scaleX(0.837);color:#111;">CH09</span>
<span class="t ya" style="left:169.1px;width:80px;text-align:center;top:0.63px;height:20px;line-height:20px;font-size:14.4px;color:#111;">常开</span>
<span class="t sm" style="left:315.2px;width:80px;text-align:center;top:0.33px;height:20px;line-height:20px;font-size:14.4px;transform:scaleX(0.75);color:#111;">NPN</span>
<span class="t sm" style="left:470.1px;width:80px;text-align:center;top:0.33px;height:20px;line-height:20px;font-size:14.4px;color:#111;">0</span>
<div style="left:276.5px;top:.8px;width:15.1px;height:18.2px;background:#f0f0f0;"></div>
<div class="tri2" style="left:282.2px;top:8.7px;width:5.4px;height:3.1px;"></div>
<div style="left:419.6px;top:.8px;width:14.7px;height:18.2px;background:#f0f0f0;"></div>
<div class="tri2" style="left:425.1px;top:8.7px;width:5.4px;height:3.1px;"></div>
<div style="left:586.8px;top:1px;width:141.7px;height:18.4px;border:1.6px solid rgba(0,0,0,.45);background:rgba(255,255,255,.04);"></div>
<span class="t ya" style="left:616.8px;width:80px;text-align:center;top:0.63px;height:20px;line-height:20px;font-size:14px;color:#222;">发送</span>
<div style="left:144.5px;top:0;width:1px;height:20.853px;background:rgba(255,255,255,.55);"></div>
<div style="left:292.5px;top:0;width:1px;height:20.853px;background:rgba(255,255,255,.55);"></div>
<div style="left:435.5px;top:0;width:1px;height:20.853px;background:rgba(255,255,255,.55);"></div>
<div style="left:585.5px;top:0;width:1px;height:20.853px;background:rgba(255,255,255,.55);"></div>
<div style="left:0;top:19.85px;width:800px;height:1px;background:rgba(255,255,255,.55);"></div>
</div>
<div style="left:74.6px;top:520.53px;width:729.3px;height:20.85px;background:#66cdaa;overflow:hidden;">
<span class="t sm" style="left:30.4px;width:80px;text-align:center;top:0.33px;height:20px;line-height:20px;font-size:14.4px;transform:scaleX(0.837);color:#111;">CH10</span>
<span class="t ya" style="left:169.1px;width:80px;text-align:center;top:0.63px;height:20px;line-height:20px;font-size:14.4px;color:#111;">常开</span>
<span class="t sm" style="left:315.2px;width:80px;text-align:center;top:0.33px;height:20px;line-height:20px;font-size:14.4px;transform:scaleX(0.75);color:#111;">NPN</span>
<span class="t sm" style="left:470.1px;width:80px;text-align:center;top:0.33px;height:20px;line-height:20px;font-size:14.4px;color:#111;">0</span>
<div style="left:276.5px;top:.8px;width:15.1px;height:18.2px;background:#f0f0f0;"></div>
<div class="tri2" style="left:282.2px;top:8.7px;width:5.4px;height:3.1px;"></div>
<div style="left:419.6px;top:.8px;width:14.7px;height:18.2px;background:#f0f0f0;"></div>
<div class="tri2" style="left:425.1px;top:8.7px;width:5.4px;height:3.1px;"></div>
<div style="left:586.8px;top:1px;width:141.7px;height:18.4px;border:1.6px solid rgba(0,0,0,.45);background:rgba(255,255,255,.04);"></div>
<span class="t ya" style="left:616.8px;width:80px;text-align:center;top:0.63px;height:20px;line-height:20px;font-size:14px;color:#222;">发送</span>
<div style="left:144.5px;top:0;width:1px;height:20.853px;background:rgba(255,255,255,.55);"></div>
<div style="left:292.5px;top:0;width:1px;height:20.853px;background:rgba(255,255,255,.55);"></div>
<div style="left:435.5px;top:0;width:1px;height:20.853px;background:rgba(255,255,255,.55);"></div>
<div style="left:585.5px;top:0;width:1px;height:20.853px;background:rgba(255,255,255,.55);"></div>
<div style="left:0;top:19.85px;width:800px;height:1px;background:rgba(255,255,255,.55);"></div>
</div>
<div style="left:74.6px;top:541.38px;width:729.3px;height:20.85px;background:#9ab4d3;overflow:hidden;">
<span class="t sm" style="left:30.4px;width:80px;text-align:center;top:0.33px;height:20px;line-height:20px;font-size:14.4px;transform:scaleX(0.85);color:#111;">CH11</span>
<span class="t ya" style="left:169.1px;width:80px;text-align:center;top:0.63px;height:20px;line-height:20px;font-size:14.4px;color:#111;">常开</span>
<span class="t sm" style="left:315.2px;width:80px;text-align:center;top:0.33px;height:20px;line-height:20px;font-size:14.4px;transform:scaleX(0.75);color:#111;">NPN</span>
<span class="t sm" style="left:470.1px;width:80px;text-align:center;top:0.33px;height:20px;line-height:20px;font-size:14.4px;color:#111;">0</span>
<div style="left:276.5px;top:.8px;width:15.1px;height:18.2px;background:#f0f0f0;"></div>
<div class="tri2" style="left:282.2px;top:8.7px;width:5.4px;height:3.1px;"></div>
<div style="left:419.6px;top:.8px;width:14.7px;height:18.2px;background:#f0f0f0;"></div>
<div class="tri2" style="left:425.1px;top:8.7px;width:5.4px;height:3.1px;"></div>
<div style="left:586.8px;top:1px;width:141.7px;height:18.4px;border:1.6px solid rgba(0,0,0,.45);background:rgba(255,255,255,.04);"></div>
<span class="t ya" style="left:616.8px;width:80px;text-align:center;top:0.63px;height:20px;line-height:20px;font-size:14px;color:#222;">发送</span>
<div style="left:144.5px;top:0;width:1px;height:20.853px;background:rgba(255,255,255,.55);"></div>
<div style="left:292.5px;top:0;width:1px;height:20.853px;background:rgba(255,255,255,.55);"></div>
<div style="left:435.5px;top:0;width:1px;height:20.853px;background:rgba(255,255,255,.55);"></div>
<div style="left:585.5px;top:0;width:1px;height:20.853px;background:rgba(255,255,255,.55);"></div>
<div style="left:0;top:19.85px;width:800px;height:1px;background:rgba(255,255,255,.55);"></div>
</div>
<div style="left:74.6px;top:562.24px;width:729.3px;height:20.85px;background:#66cdaa;overflow:hidden;">
<span class="t sm" style="left:30.4px;width:80px;text-align:center;top:0.33px;height:20px;line-height:20px;font-size:14.4px;transform:scaleX(0.837);color:#111;">CH12</span>
<span class="t ya" style="left:169.1px;width:80px;text-align:center;top:0.63px;height:20px;line-height:20px;font-size:14.4px;color:#111;">常开</span>
<span class="t sm" style="left:315.2px;width:80px;text-align:center;top:0.33px;height:20px;line-height:20px;font-size:14.4px;transform:scaleX(0.75);color:#111;">NPN</span>
<span class="t sm" style="left:470.1px;width:80px;text-align:center;top:0.33px;height:20px;line-height:20px;font-size:14.4px;color:#111;">0</span>
<div style="left:276.5px;top:.8px;width:15.1px;height:18.2px;background:#f0f0f0;"></div>
<div class="tri2" style="left:282.2px;top:8.7px;width:5.4px;height:3.1px;"></div>
<div style="left:419.6px;top:.8px;width:14.7px;height:18.2px;background:#f0f0f0;"></div>
<div class="tri2" style="left:425.1px;top:8.7px;width:5.4px;height:3.1px;"></div>
<div style="left:586.8px;top:1px;width:141.7px;height:18.4px;border:1.6px solid rgba(0,0,0,.45);background:rgba(255,255,255,.04);"></div>
<span class="t ya" style="left:616.8px;width:80px;text-align:center;top:0.63px;height:20px;line-height:20px;font-size:14px;color:#222;">发送</span>
<div style="left:144.5px;top:0;width:1px;height:20.853px;background:rgba(255,255,255,.55);"></div>
<div style="left:292.5px;top:0;width:1px;height:20.853px;background:rgba(255,255,255,.55);"></div>
<div style="left:435.5px;top:0;width:1px;height:20.853px;background:rgba(255,255,255,.55);"></div>
<div style="left:585.5px;top:0;width:1px;height:20.853px;background:rgba(255,255,255,.55);"></div>
<div style="left:0;top:19.85px;width:800px;height:1px;background:rgba(255,255,255,.55);"></div>
</div>
<div style="left:74.6px;top:583.09px;width:729.3px;height:20.85px;background:#9ab4d3;overflow:hidden;">
<span class="t sm" style="left:30.4px;width:80px;text-align:center;top:0.33px;height:20px;line-height:20px;font-size:14.4px;transform:scaleX(0.837);color:#111;">CH13</span>
<span class="t ya" style="left:169.1px;width:80px;text-align:center;top:0.63px;height:20px;line-height:20px;font-size:14.4px;color:#111;">常开</span>
<span class="t sm" style="left:315.2px;width:80px;text-align:center;top:0.33px;height:20px;line-height:20px;font-size:14.4px;transform:scaleX(0.75);color:#111;">NPN</span>
<span class="t sm" style="left:470.1px;width:80px;text-align:center;top:0.33px;height:20px;line-height:20px;font-size:14.4px;color:#111;">0</span>
<div style="left:276.5px;top:.8px;width:15.1px;height:18.2px;background:#f0f0f0;"></div>
<div class="tri2" style="left:282.2px;top:8.7px;width:5.4px;height:3.1px;"></div>
<div style="left:419.6px;top:.8px;width:14.7px;height:18.2px;background:#f0f0f0;"></div>
<div class="tri2" style="left:425.1px;top:8.7px;width:5.4px;height:3.1px;"></div>
<div style="left:586.8px;top:1px;width:141.7px;height:18.4px;border:1.6px solid rgba(0,0,0,.45);background:rgba(255,255,255,.04);"></div>
<span class="t ya" style="left:616.8px;width:80px;text-align:center;top:0.63px;height:20px;line-height:20px;font-size:14px;color:#222;">发送</span>
<div style="left:144.5px;top:0;width:1px;height:20.853px;background:rgba(255,255,255,.55);"></div>
<div style="left:292.5px;top:0;width:1px;height:20.853px;background:rgba(255,255,255,.55);"></div>
<div style="left:435.5px;top:0;width:1px;height:20.853px;background:rgba(255,255,255,.55);"></div>
<div style="left:585.5px;top:0;width:1px;height:20.853px;background:rgba(255,255,255,.55);"></div>
<div style="left:0;top:19.85px;width:800px;height:1px;background:rgba(255,255,255,.55);"></div>
</div>
<div style="left:74.6px;top:603.94px;width:729.3px;height:20.85px;background:#66cdaa;overflow:hidden;">
<span class="t sm" style="left:30.4px;width:80px;text-align:center;top:0.33px;height:20px;line-height:20px;font-size:14.4px;transform:scaleX(0.837);color:#111;">CH14</span>
<span class="t ya" style="left:169.1px;width:80px;text-align:center;top:0.63px;height:20px;line-height:20px;font-size:14.4px;color:#111;">常开</span>
<span class="t sm" style="left:315.2px;width:80px;text-align:center;top:0.33px;height:20px;line-height:20px;font-size:14.4px;transform:scaleX(0.75);color:#111;">NPN</span>
<span class="t sm" style="left:470.1px;width:80px;text-align:center;top:0.33px;height:20px;line-height:20px;font-size:14.4px;color:#111;">0</span>
<div style="left:276.5px;top:.8px;width:15.1px;height:18.2px;background:#f0f0f0;"></div>
<div class="tri2" style="left:282.2px;top:8.7px;width:5.4px;height:3.1px;"></div>
<div style="left:419.6px;top:.8px;width:14.7px;height:18.2px;background:#f0f0f0;"></div>
<div class="tri2" style="left:425.1px;top:8.7px;width:5.4px;height:3.1px;"></div>
<div style="left:586.8px;top:1px;width:141.7px;height:18.4px;border:1.6px solid rgba(0,0,0,.45);background:rgba(255,255,255,.04);"></div>
<span class="t ya" style="left:616.8px;width:80px;text-align:center;top:0.63px;height:20px;line-height:20px;font-size:14px;color:#222;">发送</span>
<div style="left:144.5px;top:0;width:1px;height:20.853px;background:rgba(255,255,255,.55);"></div>
<div style="left:292.5px;top:0;width:1px;height:20.853px;background:rgba(255,255,255,.55);"></div>
<div style="left:435.5px;top:0;width:1px;height:20.853px;background:rgba(255,255,255,.55);"></div>
<div style="left:585.5px;top:0;width:1px;height:20.853px;background:rgba(255,255,255,.55);"></div>
<div style="left:0;top:19.85px;width:800px;height:1px;background:rgba(255,255,255,.55);"></div>
</div>
<div style="left:74.6px;top:624.80px;width:729.3px;height:20.85px;background:#9ab4d3;overflow:hidden;">
<span class="t sm" style="left:30.4px;width:80px;text-align:center;top:0.33px;height:20px;line-height:20px;font-size:14.4px;transform:scaleX(0.837);color:#111;">CH15</span>
<span class="t ya" style="left:169.1px;width:80px;text-align:center;top:0.63px;height:20px;line-height:20px;font-size:14.4px;color:#111;">常开</span>
<span class="t sm" style="left:315.2px;width:80px;text-align:center;top:0.33px;height:20px;line-height:20px;font-size:14.4px;transform:scaleX(0.75);color:#111;">NPN</span>
<span class="t sm" style="left:470.1px;width:80px;text-align:center;top:0.33px;height:20px;line-height:20px;font-size:14.4px;color:#111;">0</span>
<div style="left:276.5px;top:.8px;width:15.1px;height:18.2px;background:#f0f0f0;"></div>
<div class="tri2" style="left:282.2px;top:8.7px;width:5.4px;height:3.1px;"></div>
<div style="left:419.6px;top:.8px;width:14.7px;height:18.2px;background:#f0f0f0;"></div>
<div class="tri2" style="left:425.1px;top:8.7px;width:5.4px;height:3.1px;"></div>
<div style="left:586.8px;top:1px;width:141.7px;height:18.4px;border:1.6px solid rgba(0,0,0,.45);background:rgba(255,255,255,.04);"></div>
<span class="t ya" style="left:616.8px;width:80px;text-align:center;top:0.63px;height:20px;line-height:20px;font-size:14px;color:#222;">发送</span>
<div style="left:144.5px;top:0;width:1px;height:20.853px;background:rgba(255,255,255,.55);"></div>
<div style="left:292.5px;top:0;width:1px;height:20.853px;background:rgba(255,255,255,.55);"></div>
<div style="left:435.5px;top:0;width:1px;height:20.853px;background:rgba(255,255,255,.55);"></div>
<div style="left:585.5px;top:0;width:1px;height:20.853px;background:rgba(255,255,255,.55);"></div>
<div style="left:0;top:19.85px;width:800px;height:1px;background:rgba(255,255,255,.55);"></div>
</div>
<div style="left:74.6px;top:645.65px;width:729.3px;height:20.85px;background:#66cdaa;overflow:hidden;">
<span class="t sm" style="left:30.4px;width:80px;text-align:center;top:0.33px;height:20px;line-height:20px;font-size:14.4px;transform:scaleX(0.837);color:#111;">CH16</span>
<span class="t ya" style="left:169.1px;width:80px;text-align:center;top:0.63px;height:20px;line-height:20px;font-size:14.4px;color:#111;">常开</span>
<span class="t sm" style="left:315.2px;width:80px;text-align:center;top:0.33px;height:20px;line-height:20px;font-size:14.4px;transform:scaleX(0.75);color:#111;">NPN</span>
<span class="t sm" style="left:470.1px;width:80px;text-align:center;top:0.33px;height:20px;line-height:20px;font-size:14.4px;color:#111;">0</span>
<div style="left:276.5px;top:.8px;width:15.1px;height:18.2px;background:#f0f0f0;"></div>
<div class="tri2" style="left:282.2px;top:8.7px;width:5.4px;height:3.1px;"></div>
<div style="left:419.6px;top:.8px;width:14.7px;height:18.2px;background:#f0f0f0;"></div>
<div class="tri2" style="left:425.1px;top:8.7px;width:5.4px;height:3.1px;"></div>
<div style="left:586.8px;top:1px;width:141.7px;height:18.4px;border:1.6px solid rgba(0,0,0,.45);background:rgba(255,255,255,.04);"></div>
<span class="t ya" style="left:616.8px;width:80px;text-align:center;top:0.63px;height:20px;line-height:20px;font-size:14px;color:#222;">发送</span>
<div style="left:144.5px;top:0;width:1px;height:20.853px;background:rgba(255,255,255,.55);"></div>
<div style="left:292.5px;top:0;width:1px;height:20.853px;background:rgba(255,255,255,.55);"></div>
<div style="left:435.5px;top:0;width:1px;height:20.853px;background:rgba(255,255,255,.55);"></div>
<div style="left:585.5px;top:0;width:1px;height:20.853px;background:rgba(255,255,255,.55);"></div>
<div style="left:0;top:19.85px;width:800px;height:1px;background:rgba(255,255,255,.55);"></div>
</div>
<div style="left:74.6px;top:666.50px;width:729.3px;height:20.85px;background:#9ab4d3;overflow:hidden;">
<span class="t sm" style="left:30.4px;width:80px;text-align:center;top:0.33px;height:20px;line-height:20px;font-size:14.4px;transform:scaleX(0.837);color:#111;">CH17</span>
<span class="t ya" style="left:169.1px;width:80px;text-align:center;top:0.63px;height:20px;line-height:20px;font-size:14.4px;color:#111;">常开</span>
<span class="t sm" style="left:315.2px;width:80px;text-align:center;top:0.33px;height:20px;line-height:20px;font-size:14.4px;transform:scaleX(0.75);color:#111;">NPN</span>
<span class="t sm" style="left:470.1px;width:80px;text-align:center;top:0.33px;height:20px;line-height:20px;font-size:14.4px;color:#111;">0</span>
<div style="left:276.5px;top:.8px;width:15.1px;height:18.2px;background:#f0f0f0;"></div>
<div class="tri2" style="left:282.2px;top:8.7px;width:5.4px;height:3.1px;"></div>
<div style="left:419.6px;top:.8px;width:14.7px;height:18.2px;background:#f0f0f0;"></div>
<div class="tri2" style="left:425.1px;top:8.7px;width:5.4px;height:3.1px;"></div>
<div style="left:586.8px;top:1px;width:141.7px;height:18.4px;border:1.6px solid rgba(0,0,0,.45);background:rgba(255,255,255,.04);"></div>
<span class="t ya" style="left:616.8px;width:80px;text-align:center;top:0.63px;height:20px;line-height:20px;font-size:14px;color:#222;">发送</span>
<div style="left:144.5px;top:0;width:1px;height:20.853px;background:rgba(255,255,255,.55);"></div>
<div style="left:292.5px;top:0;width:1px;height:20.853px;background:rgba(255,255,255,.55);"></div>
<div style="left:435.5px;top:0;width:1px;height:20.853px;background:rgba(255,255,255,.55);"></div>
<div style="left:585.5px;top:0;width:1px;height:20.853px;background:rgba(255,255,255,.55);"></div>
<div style="left:0;top:19.85px;width:800px;height:1px;background:rgba(255,255,255,.55);"></div>
</div>
<div style="left:74.6px;top:687.35px;width:729.3px;height:20.85px;background:#66cdaa;overflow:hidden;">
<span class="t sm" style="left:30.4px;width:80px;text-align:center;top:0.33px;height:20px;line-height:20px;font-size:14.4px;transform:scaleX(0.837);color:#111;">CH18</span>
<span class="t ya" style="left:169.1px;width:80px;text-align:center;top:0.63px;height:20px;line-height:20px;font-size:14.4px;color:#111;">常开</span>
<span class="t sm" style="left:315.2px;width:80px;text-align:center;top:0.33px;height:20px;line-height:20px;font-size:14.4px;transform:scaleX(0.75);color:#111;">NPN</span>
<span class="t sm" style="left:470.1px;width:80px;text-align:center;top:0.33px;height:20px;line-height:20px;font-size:14.4px;color:#111;">0</span>
<div style="left:276.5px;top:.8px;width:15.1px;height:18.2px;background:#f0f0f0;"></div>
<div class="tri2" style="left:282.2px;top:8.7px;width:5.4px;height:3.1px;"></div>
<div style="left:419.6px;top:.8px;width:14.7px;height:18.2px;background:#f0f0f0;"></div>
<div class="tri2" style="left:425.1px;top:8.7px;width:5.4px;height:3.1px;"></div>
<div style="left:586.8px;top:1px;width:141.7px;height:18.4px;border:1.6px solid rgba(0,0,0,.45);background:rgba(255,255,255,.04);"></div>
<span class="t ya" style="left:616.8px;width:80px;text-align:center;top:0.63px;height:20px;line-height:20px;font-size:14px;color:#222;">发送</span>
<div style="left:144.5px;top:0;width:1px;height:20.853px;background:rgba(255,255,255,.55);"></div>
<div style="left:292.5px;top:0;width:1px;height:20.853px;background:rgba(255,255,255,.55);"></div>
<div style="left:435.5px;top:0;width:1px;height:20.853px;background:rgba(255,255,255,.55);"></div>
<div style="left:585.5px;top:0;width:1px;height:20.853px;background:rgba(255,255,255,.55);"></div>
<div style="left:0;top:19.85px;width:800px;height:1px;background:rgba(255,255,255,.55);"></div>
</div>
<div style="left:74.6px;top:708.21px;width:729.3px;height:4.99px;background:#9ab4d3;overflow:hidden;">
<span class="t sm" style="left:30.4px;width:80px;text-align:center;top:0.33px;height:20px;line-height:20px;font-size:14.4px;transform:scaleX(0.837);color:#111;">CH19</span>
<span class="t ya" style="left:169.1px;width:80px;text-align:center;top:0.63px;height:20px;line-height:20px;font-size:14.4px;color:#111;">常开</span>
<span class="t sm" style="left:315.2px;width:80px;text-align:center;top:0.33px;height:20px;line-height:20px;font-size:14.4px;transform:scaleX(0.75);color:#111;">NPN</span>
<span class="t sm" style="left:470.1px;width:80px;text-align:center;top:0.33px;height:20px;line-height:20px;font-size:14.4px;color:#111;">0</span>
<div style="left:276.5px;top:.8px;width:15.1px;height:18.2px;background:#f0f0f0;"></div>
<div class="tri2" style="left:282.2px;top:8.7px;width:5.4px;height:3.1px;"></div>
<div style="left:419.6px;top:.8px;width:14.7px;height:18.2px;background:#f0f0f0;"></div>
<div class="tri2" style="left:425.1px;top:8.7px;width:5.4px;height:3.1px;"></div>
<div style="left:586.8px;top:1px;width:141.7px;height:18.4px;border:1.6px solid rgba(0,0,0,.45);background:rgba(255,255,255,.04);"></div>
<span class="t ya" style="left:616.8px;width:80px;text-align:center;top:0.63px;height:20px;line-height:20px;font-size:14px;color:#222;">发送</span>
<div style="left:144.5px;top:0;width:1px;height:20.853px;background:rgba(255,255,255,.55);"></div>
<div style="left:292.5px;top:0;width:1px;height:20.853px;background:rgba(255,255,255,.55);"></div>
<div style="left:435.5px;top:0;width:1px;height:20.853px;background:rgba(255,255,255,.55);"></div>
<div style="left:585.5px;top:0;width:1px;height:20.853px;background:rgba(255,255,255,.55);"></div>
<div style="left:0;top:19.85px;width:800px;height:1px;background:rgba(255,255,255,.55);"></div>
</div>
<div style="left:804px;top:294px;width:16px;height:419px;background:#f0f0f0;"></div>
<div style="left:805.4px;top:309.2px;width:13.5px;height:155.8px;background:#cdcdcd;"></div>
<svg style="left:804px;top:295px" width="16" height="418" viewBox="0 0 16 418"><path d="M5.600 9.200L8.200 6.300L10.800 9.200" fill="none" stroke="#555" stroke-width="2"/><path d="M5.600 409L8.200 411.900L10.800 409" fill="none" stroke="#555" stroke-width="2"/></svg>
<div style="left:845px;top:140px;width:12px;height:12px;background:#fff;border:1px solid #333;"></div>
<div style="left:845px;top:166.6px;width:12px;height:12px;background:#fff;border:1px solid #333;"></div>
<div style="left:979px;top:166.6px;width:12px;height:12px;background:#fff;border:1px solid #333;"></div>
<span class="t ya" style="left:863.6px;top:137px;height:20px;line-height:20px;font-size:14.4px;color:#333;">暂停显示</span>
<span class="t ya" style="left:863.6px;top:163.2px;height:20px;line-height:20px;font-size:14.4px;color:#333;">不显示发送数据</span>
<span class="t ya" style="left:997.4px;top:163.2px;height:20px;line-height:20px;font-size:14.4px;color:#333;">协议解析</span>
<div style="left:845px;top:196px;width:53.7px;height:30.6px;border:1px solid #222;background:#f0f0f0;"></div>
<span class="t ya" style="left:843.6px;width:54px;text-align:center;top:201.5px;height:20px;line-height:20px;font-size:14.4px;color:#222;">清空</span>
<div style="left:829px;top:246px;width:243px;height:473px;background:#fff;border-left:2px solid #8a8a8a;border-top:2px solid #8a8a8a;border-bottom:1px solid #dcdcdc;border-right:1px solid #e3e3e3;"></div>
<div style="left:68px;top:717px;width:758px;height:2px;background:#fafafa;"></div>
<div style="left:0px;top:717px;width:68px;height:2px;background:#4682b4;"></div>
<div style="left:0px;top:719px;width:1074px;height:1px;background:#f2f2f2;"></div>
<div style="left:0px;top:720px;width:1074px;height:1px;background:#fff;"></div>
<div style="left:0px;top:720px;width:106px;height:1px;background:#c4c8cc;"></div>
<div style="left:238px;top:720px;width:315px;height:1px;background:repeating-linear-gradient(90deg,#555 0 4px,#fff 4px 9px,#666 9px 11px,#fff 11px 15px);"></div>
<div style="left:829px;top:719px;width:243px;height:2px;background:#e4e4e4;"></div>
</body></html>
